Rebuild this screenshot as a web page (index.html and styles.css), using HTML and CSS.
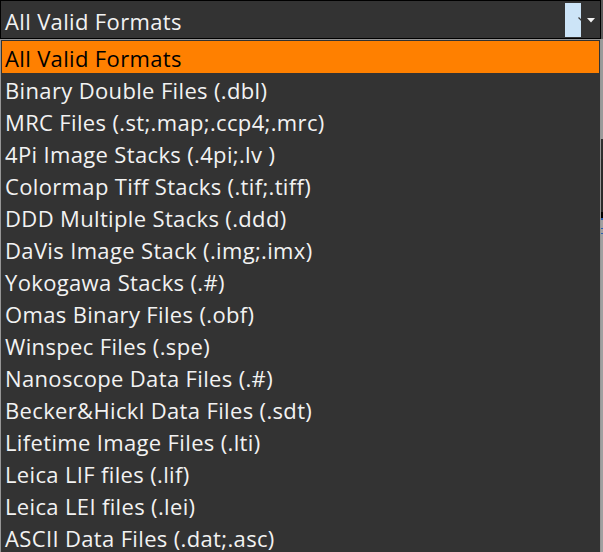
FILE: index.html
```html
<!DOCTYPE html>
<html>
<head>
<meta charset="utf-8">
<link rel="stylesheet" href="styles.css">
</head>
<body>
<div class="screen">
  <div class="main">
    <div class="combo">
      <span class="combo-text">All Valid Formats</span>
      <span class="combo-hl">
        <svg class="tick" width="4" height="4" viewBox="0 0 4 4"><path d="M0.5 0.5 L3.5 3.5" stroke="#3a3a3a" stroke-width="1.2"/></svg>
      </span>
      <span class="combo-arrow">
        <svg width="8" height="5" viewBox="0 0 8 5"><path d="M0 0 H8 L4 4.5 Z" fill="#f4f4f4"/></svg>
      </span>
    </div>
    <ul class="dropdown">
      <li class="item selected">All Valid Formats</li>
      <li class="item">Binary Double Files (.dbl)</li>
      <li class="item">MRC Files (.st;.map;.ccp4;.mrc)</li>
      <li class="item">4Pi Image Stacks (.4pi;.lv )</li>
      <li class="item">Colormap Tiff Stacks (.tif;.tiff)</li>
      <li class="item">DDD Multiple Stacks (.ddd)</li>
      <li class="item">DaVis Image Stack (.img;.imx)</li>
      <li class="item">Yokogawa Stacks (.#)</li>
      <li class="item">Omas Binary Files (.obf)</li>
      <li class="item">Winspec Files (.spe)</li>
      <li class="item">Nanoscope Data Files (.#)</li>
      <li class="item">Becker&amp;Hickl Data Files (.sdt)</li>
      <li class="item">Lifetime Image Files (.lti)</li>
      <li class="item">Leica LIF files (.lif)</li>
      <li class="item">Leica LEI files (.lei)</li>
      <li class="item">ASCII Data Files (.dat;.asc)</li>
    </ul>
  </div>
  <div class="strip">
    <div class="seg seg-a"></div>
    <div class="seg seg-b"></div>
    <div class="seg seg-c"></div>
    <div class="seg seg-d"></div>
    <div class="seg seg-e"></div>
    <div class="seg seg-blue"></div>
    <div class="seg seg-f"></div>
    <div class="seg seg-blue1"></div>
    <div class="seg seg-g"></div>
    <div class="seg seg-blue1"></div>
    <div class="seg seg-h"></div>
  </div>
</div>
</body>
</html>
```

FILE: styles.css
```css
html, body {
  margin: 0;
  padding: 0;
  background: #333333;
  overflow: hidden;
}

.screen {
  width: 603px;
  height: 552px;
  display: grid;
  grid-template-columns: 601px 2px;
  font-family: "Open Sans", "Noto Sans", sans-serif;
  font-size: 22px;
  letter-spacing: 0.35px;
  color: #f2f2f2;
}

.main {
  position: relative;
  height: 552px;
  background: #333333;
}

.combo {
  box-sizing: border-box;
  height: 39px;
  border: 1px solid #000000;
  background: #333333;
  display: flex;
  align-items: center;
  padding-left: 4px;
}

.combo-text {
  flex: 1;
  line-height: 36px;
  padding-top: 2px;
}

.combo-hl {
  width: 16px;
  height: 34px;
  background: #cce4f7;
  position: relative;
}

.tick {
  position: absolute;
  left: 13px;
  top: 14px;
}

.combo-arrow {
  width: 19px;
  display: flex;
  justify-content: center;
  padding-top: 2px;
}

.dropdown {
  position: absolute;
  top: 39px;
  left: 0;
  width: 601px;
  box-sizing: border-box;
  margin: 0;
  padding: 1px;
  list-style: none;
  border: 1px solid #969696;
  border-bottom: none;
  background: #333333;
  height: 520px;
}

.item {
  box-sizing: border-box;
  height: 32px;
  padding-top: 2px;
  line-height: 30px;
  padding-left: 3px;
  white-space: nowrap;
}

.item.selected {
  background: #ff8000;
  color: #000000;
}

.strip {
  display: flex;
  flex-direction: column;
}

.seg { width: 2px; }
.seg-a { height: 39px; background: #5c5c5c; }
.seg-b { height: 100px; background: #9a9a9a; }
.seg-c { height: 20px; background: #2e2e2e; }
.seg-d { height: 53px; background: #2a2a2a; }
.seg-e { flex: 0 0 6px; background: #000000; }
.seg-blue { height: 2px; background: #2d5fb0; }
.seg-blue1 { height: 1px; background: #2d5fb0; }
.seg-f { height: 8px; background: #a0a0a0; }
.seg-g { height: 4px; background: #a0a0a0; }
.seg-h { flex: 1; background: #a0a0a0; }
```
